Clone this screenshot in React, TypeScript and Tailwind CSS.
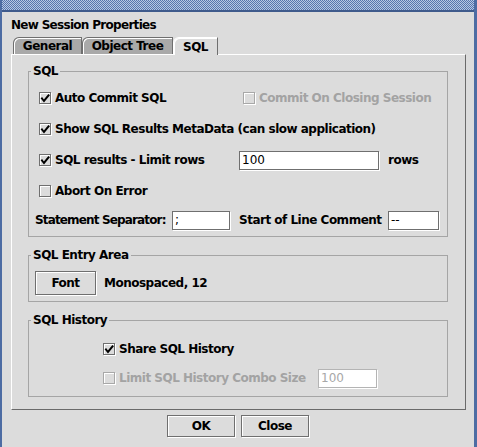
import React from 'react';

const CheckBox = ({ checked, disabled }: { checked?: boolean; disabled?: boolean }) => (
  <span
    className={`flex items-center justify-center w-[12px] h-[12px] shrink-0 border shadow-[1px_1px_0_#ffffff,inset_1px_1px_0_#ffffff] ${
      disabled ? 'border-[#a8a8a8]' : 'border-[#6f6f6f]'
    }`}
  >
    {checked && (
      <svg width="10" height="10" viewBox="0 0 10 10" className="block">
        <path d="M2 5.5 L4 8 L8.5 2.5" fill="none" stroke="#000" strokeWidth="2" strokeLinecap="square" />
      </svg>
    )}
  </span>
);

const Field = ({ value, className, disabled }: { value: string; className: string; disabled?: boolean }) => (
  <div
    className={`h-[19px] shrink-0 bg-white border shadow-[1px_1px_0_#ffffff] font-normal tracking-normal px-[2px] flex items-center ${
      disabled ? 'border-[#b4b4b4] text-[#a8a8a8]' : 'border-[#6f6f6f] text-black'
    } ${className}`}
  >
    {value}
  </div>
);

const Group = ({ title, className, children }: { title: string; className: string; children: React.ReactNode }) => (
  <fieldset className={`border border-[#a5a5a5] ${className}`}>
    <legend className="ml-[2px] px-[2px]">{title}</legend>
    {children}
  </fieldset>
);

const Tab = ({ label, width, selected }: { label: string; width: string; selected?: boolean }) => (
  <div
    className={`${width} h-[17px] flex items-center justify-center border-t border-l border-r border-[#6f6f6f] rounded-tl-[6px] shadow-[inset_1px_1px_0_#ffffff] ${
      selected ? 'bg-[#dcdcdc] relative z-10 h-[18px] -mb-[1px] border-l-[#ffffff] border-t-[#ffffff]' : 'bg-[#a9a9a9]'
    }`}
  >
    {label}
  </div>
);

const Btn = ({ label, className }: { label: string; className: string }) => (
  <div
    className={`flex items-center justify-center border border-[#6f6f6f] shadow-[1px_1px_0_#ffffff,inset_1px_1px_0_#ffffff] bg-[#dcdcdc] ${className}`}
  >
    {label}
  </div>
);

export default function App() {
  return (
    <div className="w-[477px] h-[447px] bg-[#dcdcdc] border-l-2 border-r-[3px] border-[#4d6ca3] flex flex-col font-['DejaVu_Sans',sans-serif] font-bold text-[12px] leading-[16px] text-black tracking-[-0.5px] whitespace-nowrap overflow-hidden">
      {/* title bar strip */}
      <div className="h-[12px] shrink-0 border-b-2 border-[#3f5b8c] bg-[repeating-conic-gradient(#b7c7e4_0_25%,#5676ad_0_50%)] bg-[length:2px_2px]" />

      <div className="pl-[9px] pt-[5px]">
        <div className="h-[16px] tracking-[-0.7px]">New Session Properties</div>

        <div className="flex pl-[2px] mt-[4px] items-end">
          <Tab label="General" width="w-[69px]" />
          <Tab label="Object Tree" width="w-[91px]" />
          <Tab label="SQL" width="w-[45px]" selected />
        </div>

        <div className="w-[455px] h-[356px] border border-white border-r-[#6a6a6a] border-b-[#6a6a6a] pt-[8px] pl-[16px] pr-[17px] flex flex-col gap-[10px]">
          <Group title="SQL" className="pb-[6px]">
            <div className="flex flex-col pt-[9px]">
              <div className="h-[20px] flex items-center pl-[10px]">
                <div className="w-[204px] flex items-center gap-[4px]">
                  <CheckBox checked />
                  <span>Auto Commit SQL</span>
                </div>
                <div className="flex items-center gap-[4px] text-[#a3a3a3]">
                  <CheckBox disabled />
                  <span>Commit On Closing Session</span>
                </div>
              </div>
              <div className="h-[20px] mt-[11px] flex items-center gap-[4px] pl-[10px]">
                <CheckBox checked />
                <span>Show SQL Results MetaData (can slow application)</span>
              </div>
              <div className="h-[20px] mt-[11px] flex items-center pl-[10px]">
                <div className="w-[200px] flex items-center gap-[4px]">
                  <CheckBox checked />
                  <span>SQL results - Limit rows</span>
                </div>
                <Field value="100" className="w-[140px]" />
                <span className="ml-[9px]">rows</span>
              </div>
              <div className="h-[20px] mt-[11px] flex items-center gap-[4px] pl-[10px]">
                <CheckBox />
                <span>Abort On Error</span>
              </div>
              <div className="h-[20px] mt-[9px] flex items-center pl-[6px]">
                <span className="w-[137px] shrink-0 tracking-[-0.85px]">Statement Separator:</span>
                <Field value=";" className="w-[58px]" />
                <span className="ml-[9px] w-[149px] shrink-0">Start of Line Comment</span>
                <Field value="--" className="w-[51px]" />
              </div>
            </div>
          </Group>

          <Group title="SQL Entry Area" className="pb-[6px]">
            <div className="flex items-center pt-[8px] pl-[6px]">
              <Btn label="Font" className="w-[61px] h-[24px]" />
              <span className="ml-[8px]">Monospaced, 12</span>
            </div>
          </Group>

          <Group title="SQL History" className="pb-[8px]">
            <div className="flex flex-col pt-[11px] pl-[74px]">
              <div className="h-[20px] flex items-center gap-[4px]">
                <CheckBox checked />
                <span>Share SQL History</span>
              </div>
              <div className="h-[20px] mt-[9px] flex items-center">
                <div className="w-[215px] flex items-center gap-[4px] text-[#a3a3a3]">
                  <CheckBox disabled />
                  <span>Limit SQL History Combo Size</span>
                </div>
                <Field value="100" className="w-[59px]" disabled />
              </div>
            </div>
          </Group>
        </div>
      </div>

      <div className="flex justify-center gap-[6px] mt-[5px]">
        <Btn label="OK" className="w-[68px] h-[22px]" />
        <Btn label="Close" className="w-[68px] h-[22px]" />
      </div>
    </div>
  );
}
